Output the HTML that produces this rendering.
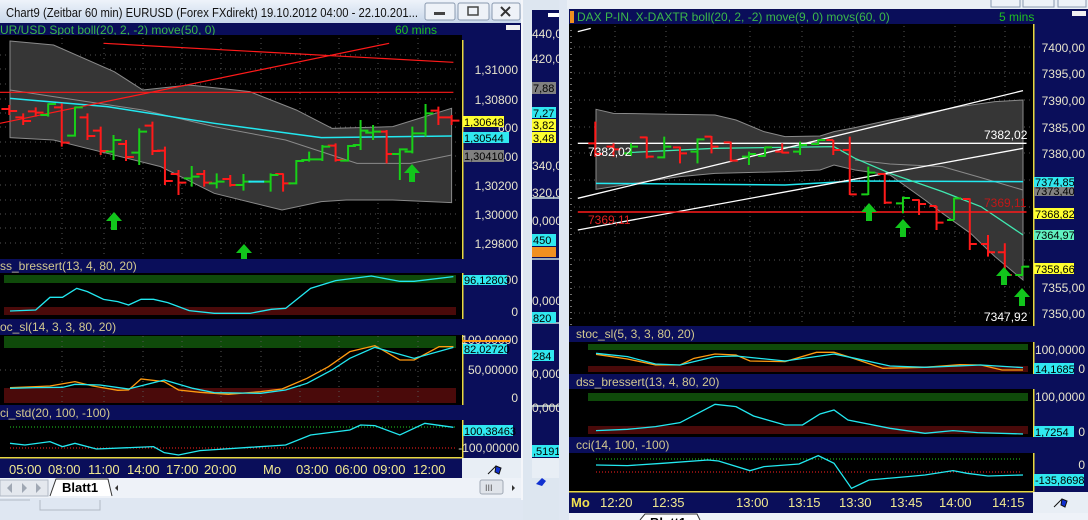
<!DOCTYPE html>
<html><head><meta charset="utf-8"><style>
html,body{margin:0;padding:0;background:#dde6f0;}
svg{display:block;font-family:"Liberation Sans",sans-serif;}
.ax{fill:#e8e4cc;font-size:12px;}
.hd{fill:#d2c890;font-size:12px;}
.tm{fill:#f0e890;font-size:13px;}
.lb{font-size:11px;fill:#000;}
</style></head><body>
<svg width="1088" height="520" viewBox="0 0 1088 520" xmlns="http://www.w3.org/2000/svg">
<defs>
<linearGradient id="tb" x1="0" y1="0" x2="0" y2="1"><stop offset="0" stop-color="#eef3fa"/><stop offset="1" stop-color="#c8d7ea"/></linearGradient>
<path id="arr" d="M0,-9 L8,0 H3 V9 H-3 V0 H-8 Z" fill="#12c51c"/>
</defs>
<rect width="1088" height="520" fill="#dde6f0"/>

<!-- ============ MIDDLE PANEL ============ -->
<rect x="532" y="10" width="30" height="468" fill="#0a0e5a"/>
<rect x="532" y="197" width="30" height="2" fill="#9ab"/>
<rect x="532" y="258" width="30" height="2" fill="#9ab"/>
<rect x="532" y="322" width="30" height="2" fill="#9ab"/>
<rect x="532" y="405" width="30" height="2" fill="#9ab"/>
<rect x="532" y="458" width="30" height="20" fill="#e8eef5"/>
<rect x="548" y="13" width="12" height="4" fill="#fff"/>
<g class="ax">
<text x="532" y="38">440,00</text><text x="532" y="63">420,00</text>
<rect x="532" y="82" width="24" height="12" fill="#808080"/><text x="533" y="92" class="lb">7,88</text>
<rect x="532" y="107" width="24" height="11" fill="#30e8f0"/><text x="533" y="117" class="lb">7,27</text>
<rect x="532" y="119" width="24" height="12" fill="#ffff30"/><text x="533" y="129" class="lb">3,82</text>
<rect x="532" y="132" width="24" height="11" fill="#ffff30"/><text x="533" y="142" class="lb">3,48</text>
<text x="532" y="170">340,00</text><text x="532" y="197">320,00</text>
<text x="532" y="225">0,0000</text>
<rect x="532" y="234" width="24" height="12" fill="#30e8f0"/><text x="533" y="244" class="lb">450</text>
<rect x="532" y="247" width="24" height="10" fill="#f09020"/>
<text x="532" y="305">0,0000</text>
<rect x="532" y="312" width="24" height="11" fill="#30e8f0"/><text x="533" y="322" class="lb">820</text>
<rect x="532" y="350" width="22" height="11" fill="#30e8f0"/><text x="533" y="360" class="lb">284</text>
<text x="532" y="378">0,0000</text><text x="532" y="412">0,0000</text>
<rect x="532" y="445" width="28" height="12" fill="#30e8f0"/><text x="533" y="455" class="lb">,5191</text>
</g>
<path d="M536,484 l6,-6 l4,3 l-4,5 z" fill="#1030d0"/>

<!-- ============ LEFT WINDOW ============ -->
<rect x="0" y="0" width="523" height="500" fill="#dfe7f2"/>
<rect x="0" y="0" width="523" height="23" fill="url(#tb)"/>
<text x="6" y="17" font-size="13" fill="#111" textLength="412" lengthAdjust="spacingAndGlyphs">Chart9 (Zeitbar 60 min)  EURUSD (Forex FXdirekt) 19.10.2012 04:00 - 22.10.201...</text>
<rect x="425" y="3" width="30" height="17" rx="2" fill="#eef2f8" stroke="#8a9ab0"/>
<rect x="434" y="12" width="11" height="3" fill="#444"/>
<rect x="458" y="3" width="31" height="17" rx="2" fill="#eef2f8" stroke="#8a9ab0"/>
<rect x="468" y="7" width="10" height="8" fill="none" stroke="#444" stroke-width="1.5"/>
<rect x="492" y="3" width="28" height="17" rx="2" fill="#eef2f8" stroke="#8a9ab0"/>
<path d="M501,7 l9,9 M510,7 l-9,9" stroke="#333" stroke-width="2"/>

<rect x="0" y="23" width="521" height="12" fill="#0a0e5a"/>
<rect x="506" y="25" width="14" height="5" fill="#f0f0f0"/>
<text x="0" y="34" font-size="12" fill="#3cb84a">UR/USD Spot boll(20, 2, -2) move(50, 0)</text>
<text x="395" y="34" font-size="12" fill="#20c020">60 mins</text>

<rect x="0" y="35" width="462" height="224" fill="#000"/>
<rect x="462" y="35" width="59" height="224" fill="#0a0e5a"/>
<rect x="462" y="40" width="1.5" height="219" fill="#e8d840"/>
<g stroke="#555" stroke-dasharray="1,4" stroke-width="1">
<path d="M62,38V258M104,38V258M143,38V258M182,38V258M221,38V258M261,38V258M300,38V258M339,38V258M378,38V258M418,38V258"/>
<path d="M0,55H460M0,69H460M0,84H460M0,99H460M0,113H460M0,127H460M0,142H460M0,156H460M0,171H460M0,185H460M0,200H460M0,214H460M0,228H460M0,243H460"/>
</g>
<g transform="translate(0,0) scale(0.357,0.3333)">
<polygon points="28,123 150,135 320,215 400,270 530,255 700,275 830,330 930,385 1100,380 1265,325 1265,608 1100,600 970,600 900,605 790,630 600,580 450,500 300,460 150,420 28,413" fill="#363636" stroke="#8a8a8a" stroke-width="1" vector-effect="non-scaling-stroke"/>
<polyline points="28,270 150,290 400,330 600,380 800,420 1000,490 1150,490 1265,465" fill="none" stroke="#8a8a8a" stroke-width="1" vector-effect="non-scaling-stroke"/>
<polyline points="28,295 300,320 600,370 900,413 1265,408" fill="none" stroke="#22e8f0" stroke-width="1.5" vector-effect="non-scaling-stroke"/>
<g stroke="#ff1a1a" stroke-width="1.2" fill="none">
<path d="M0,277H1270" vector-effect="non-scaling-stroke"/>
<path d="M290,130L1270,187" vector-effect="non-scaling-stroke"/>
<path d="M0,370L1090,130" vector-effect="non-scaling-stroke"/>
</g>
<path fill="none" stroke="#ff1a1a" stroke-width="2" vector-effect="non-scaling-stroke" d="M26,315V345M4,327H26M26,333H48M65,340V375M43,352H65M65,363H87M100,322V350M78,334H100M100,338H122M173,310V440M151,322H173M173,428H195M245,340V420M223,352H245M245,408H267M282,380V465M260,392H282M282,453H304M353,420V483M331,432H353M353,471H375M427,365V465M405,377H427M427,453H449M462,440V555M440,452H462M462,543H484M500,510V585M478,522H500M500,548H522M572,510V560M550,522H572M572,548H594M645,525V560M623,537H645M645,555H667M793,520V575M771,522H793M793,550H815M940,430V485M918,437H940M940,480H962M1083,390V490M1061,395H1083M1083,462H1105M1228,320V375M1206,332H1228M1228,352H1250M1265,345V375M1243,352H1265M1265,362H1287"/>
<path fill="none" stroke="#18d018" stroke-width="2" vector-effect="non-scaling-stroke" d="M135,310V350M113,345H135M135,312H157M210,320V410M188,407H210M210,322H232M318,405V480M296,455H318M318,420H340M390,385V495M368,458H390M390,395H412M537,498V560M515,535H537M537,530H559M607,520V565M585,550H607M607,545H629M682,522V572M660,555H682M682,545H704M758,520V575M736,545H758M758,525H780M830,480V553M808,550H830M830,483H852M866,455V485M844,480H866M866,478H888M903,435V483M881,478H903M903,440H925M975,435V485M953,482H975M975,438H997M1010,360V450M988,435H1010M1010,392H1032M1045,375V420M1023,398H1045M1045,395H1067M1120,445V540M1098,462H1120M1120,448H1142M1155,380V460M1133,455H1155M1155,400H1177M1192,312V410M1170,400H1192M1192,340H1214"/>
<path d="M696,545H740" stroke="#22e8f0" stroke-width="2" vector-effect="non-scaling-stroke"/>
</g>
<use href="#arr" x="114" y="221"/>
<use href="#arr" x="244" y="253"/>
<use href="#arr" x="412" y="173"/>
<g class="ax" text-anchor="end">
<text x="518" y="74">1,31000</text><text x="518" y="104">1,30800</text>
<text x="518" y="190">1,30200</text><text x="518" y="219">1,30000</text><text x="518" y="248">1,29800</text>
<text x="518" y="161">400</text>
<text x="518" y="132">600</text>
</g>
<rect x="463" y="116" width="41" height="11" fill="#ffff30"/><text x="464" y="126" class="lb">1,30648</text>
<rect x="463" y="132" width="46" height="11" fill="#30e8f0"/><text x="464" y="142" class="lb">1,30544</text>
<rect x="463" y="150" width="41" height="12" fill="#808080"/><text x="464" y="160" class="lb">1,30410</text>

<!-- dss left -->
<rect x="0" y="259" width="521" height="14" fill="#0a0e5a"/>
<text x="0" y="270" class="hd">ss_bressert(13, 4, 80, 20)</text>
<rect x="0" y="273" width="462" height="46" fill="#000"/>
<rect x="462" y="273" width="59" height="46" fill="#0a0e5a"/><rect x="462" y="273" width="1.5" height="46" fill="#e8d840"/>
<rect x="4" y="275" width="452" height="8" fill="#0f4a0a"/>
<rect x="4" y="307" width="452" height="8" fill="#4a0a0a"/>
<g transform="translate(0,260) scale(0.357,0.3333)">
<polyline fill="none" stroke="#22e8f0" stroke-width="1.3" vector-effect="non-scaling-stroke" points="28,153 100,150 140,112 175,112 215,85 245,95 290,118 330,125 360,135 395,118 430,118 470,128 530,152 600,160 700,160 760,148 800,145 870,85 940,62 1040,48 1120,64 1160,64 1270,50"/>
</g>
<text x="518" y="284" class="ax" text-anchor="end">00</text>
<rect x="463" y="275" width="44" height="10" fill="#30e8f0"/><text x="464" y="284" class="lb">96,12803</text>
<text x="518" y="316" class="ax" text-anchor="end">0</text>

<!-- stoc left -->
<rect x="0" y="319" width="521" height="16" fill="#0a0e5a"/>
<text x="0" y="331" class="hd">oc_sl(14, 3, 3, 80, 20)</text>
<rect x="0" y="335" width="462" height="70" fill="#000"/>
<rect x="462" y="335" width="59" height="70" fill="#0a0e5a"/><rect x="462" y="335" width="1.5" height="70" fill="#e8d840"/>
<rect x="4" y="336" width="452" height="12" fill="#0f4a0a"/>
<rect x="4" y="388" width="452" height="15" fill="#4a0a0a"/>
<g stroke="#555" stroke-dasharray="1,4"><path d="M62,336V404M104,336V404M143,336V404M182,336V404M221,336V404M261,336V404M300,336V404M339,336V404M378,336V404M418,336V404M0,370H460"/></g>
<g transform="translate(0,260) scale(0.357,0.3333)">
<polyline fill="none" stroke="#ff9a10" stroke-width="1.3" vector-effect="non-scaling-stroke" points="28,383 100,380 140,378 210,365 260,378 330,391 360,390 395,357 460,365 500,390 560,397 640,403 730,395 790,387 860,355 920,320 980,275 1050,257 1120,300 1160,300 1230,260 1270,260"/>
<polyline fill="none" stroke="#22e8f0" stroke-width="1.3" vector-effect="non-scaling-stroke" points="28,385 100,383 175,382 210,373 280,375 360,387 460,360 540,385 600,398 730,400 800,390 860,370 930,330 980,295 1050,262 1160,295 1270,262"/>
</g>
<text x="518" y="344" class="ax" text-anchor="end">100,00000</text>
<rect x="462" y="340" width="48" height="2" fill="#ff9a10"/>
<rect x="463" y="344" width="44" height="10" fill="#30e8f0"/><text x="464" y="353" class="lb">82,02720</text>
<text x="518" y="374" class="ax" text-anchor="end">50,00000</text>
<text x="518" y="402" class="ax" text-anchor="end">0</text>

<!-- cci left -->
<rect x="0" y="405" width="521" height="15" fill="#0a0e5a"/>
<text x="0" y="417" class="hd">ci_std(20, 100, -100)</text>
<rect x="0" y="420" width="462" height="38" fill="#000"/>
<rect x="462" y="420" width="59" height="38" fill="#0a0e5a"/><rect x="462" y="420" width="1.5" height="38" fill="#e8d840"/>
<path d="M10,427H456" stroke="#20d020" stroke-dasharray="1,2"/>
<path d="M10,448H456" stroke="#ff2020" stroke-dasharray="1,2"/>
<g transform="translate(0,260) scale(0.357,0.3333)">
<polyline fill="none" stroke="#22e8f0" stroke-width="1.3" vector-effect="non-scaling-stroke" points="28,550 70,555 140,545 175,560 210,550 270,567 430,560 460,578 500,585 560,572 700,562 800,555 870,525 980,510 1010,495 1050,497 1120,525 1190,490 1270,502"/>
</g>
<rect x="463" y="425" width="50" height="11" fill="#30e8f0"/><text x="464" y="435" class="lb">100,38463</text>
<text x="519" y="452" class="ax" text-anchor="end">-100,00000</text>

<rect x="0" y="458" width="462" height="20" fill="#0a0e5a"/>
<rect x="0" y="457" width="462" height="1.5" fill="#e8d840"/>
<rect x="462" y="458" width="59" height="20" fill="#e8eef5"/>
<path d="M488,474 l8,-8 M496,466 l5,2 l-2,6 l-4,-2 z" stroke="#111" fill="#1030d0"/>
<g class="tm"><text x="9" y="474">05:00</text><text x="48" y="474">08:00</text><text x="88" y="474">11:00</text><text x="127" y="474">14:00</text><text x="166" y="474">17:00</text><text x="204" y="474">20:00</text><text x="263" y="474">Mo</text><text x="296" y="474">03:00</text><text x="335" y="474">06:00</text><text x="373" y="474">09:00</text><text x="413" y="474">12:00</text></g>
<rect x="0" y="478" width="521" height="20" fill="#eef2f8"/>
<rect x="0" y="480" width="48" height="16" fill="#e4e8ee" stroke="#b0b8c4"/>
<path d="M12,483v10l-5,-5z M22,483v10l5,-5z M36,483v10l5,-5z" fill="#a0a8b4"/>
<path d="M50,496 L56,479 H108 L112,496" fill="#fff" stroke="#333"/>
<text x="62" y="492" font-size="13" font-weight="bold" fill="#000">Blatt1</text>
<path d="M118,485 l-3,3 l3,3z" fill="#333"/>
<rect x="480" y="480" width="23" height="14" rx="2" fill="#e0e4ea" stroke="#a0a8b4"/>
<text x="485" y="491" font-size="9" fill="#555">III</text>
<path d="M512,485 l3,3 l-3,3z" fill="#333"/>
<rect x="0" y="498" width="523" height="22" fill="#dfe7f2"/>
<path d="M0,500 H30 M40,500 V510 H100 V500" stroke="#b0b8c4" fill="none"/>
<rect x="521" y="0" width="2" height="500" fill="#f4f6fa"/>

<!-- ============ RIGHT WINDOW ============ -->
<rect x="559" y="0" width="10" height="520" fill="#dfe7f2"/>
<rect x="567" y="0" width="521" height="9" fill="#eaeff6"/>
<rect x="991" y="-8" width="29" height="15" fill="#eef2f8" stroke="#8a9ab0"/>
<rect x="1023" y="-8" width="31" height="15" fill="#eef2f8" stroke="#8a9ab0"/>
<rect x="1058" y="-8" width="28" height="15" fill="#eef2f8" stroke="#8a9ab0"/>
<rect x="569" y="9" width="519" height="15" fill="#0a0e5a"/>
<rect x="570" y="11" width="4" height="12" fill="#f09020"/>
<rect x="1072" y="11" width="14" height="5" fill="#f0f0f0"/>
<text x="577" y="21" font-size="12" fill="#3cb84a">DAX P-IN. X-DAXTR boll(20, 2, -2) move(9, 0) movs(60, 0)</text>
<text x="999" y="21" font-size="12" fill="#20c020">5 mins</text>

<rect x="569" y="24" width="464" height="302" fill="#000"/>
<rect x="1033" y="24" width="55" height="302" fill="#0a0e5a"/>
<rect x="1033" y="24" width="1.5" height="302" fill="#e8d840"/>
<path d="M571,30V325" stroke="#ddd" stroke-dasharray="1,5"/>
<g stroke="#555" stroke-dasharray="1,4">
<path d="M615,26V325M666,26V325M750,26V325M802,26V325M853,26V325M904,26V325M955,26V325M1005,26V325"/>
<path d="M574,47H1030M574,73H1030M574,100H1030M574,127H1030M574,153H1030M574,180H1030M574,207H1030M574,233H1030M574,260H1030M574,287H1030M574,313H1030"/>
</g>
<g transform="translate(540,0) scale(0.35,0.3333)">
<polygon points="160,328 210,340 330,342 500,345 560,360 640,395 700,410 800,408 840,395 900,383 1000,360 1100,340 1200,320 1300,305 1380,300 1380,840 1300,770 1230,700 1150,640 1100,600 1000,525 900,510 840,495 800,510 700,515 500,520 400,530 300,545 160,568" fill="#363636" stroke="#8a8a8a" stroke-width="1" vector-effect="non-scaling-stroke"/>
<polyline points="900,480 1000,492 1150,500 1250,530 1380,570" fill="none" stroke="#8a8a8a" vector-effect="non-scaling-stroke"/>
<polyline points="160,550 700,555 900,543 1380,545" fill="none" stroke="#22e8f0" stroke-width="1.5" vector-effect="non-scaling-stroke"/>
<polyline points="250,458 500,445 840,440 900,475 1000,520 1150,575 1260,620 1380,705" fill="none" stroke="#40e8b0" stroke-width="1.3" vector-effect="non-scaling-stroke"/>
<g fill="none" stroke="#fff" stroke-width="1.3">
<path d="M108,95L145,85" vector-effect="non-scaling-stroke"/>
<path d="M108,595L1380,272" vector-effect="non-scaling-stroke"/>
<path d="M108,690L1380,445" vector-effect="non-scaling-stroke"/>
<path d="M108,430H1390" vector-effect="non-scaling-stroke"/>
</g>
<path d="M108,636H1390" stroke="#ff1a1a" stroke-width="1.5" vector-effect="non-scaling-stroke"/>
<path fill="none" stroke="#ff1a1a" stroke-width="2" vector-effect="non-scaling-stroke" d="M158,365V470M138,430H158M158,462H178M210,430V470M190,440H210M210,448H230M305,410V475M285,412H305M305,470H325M400,440V490M380,442H400M400,460H420M490,408V460M470,410H490M490,440H510M545,425V485M525,427H545M545,482H565M692,430V460M672,455H692M692,458H712M838,420V465M818,420H838M838,450H858M885,410V585M865,450H885M885,583H905M985,520V612M965,522H985M985,608H1005M1083,598V645M1063,600H1083M1083,612H1103M1133,618V690M1113,618H1133M1133,668H1153M1228,595V750M1208,597H1228M1228,732H1248M1280,705V770M1260,732H1280M1280,757H1300M1328,730V830M1308,757H1328M1328,825H1348"/>
<path fill="none" stroke="#18d018" stroke-width="2" vector-effect="non-scaling-stroke" d="M260,430V468M240,460H260M260,440H280M355,410V475M335,472H355M355,440H375M450,415V490M430,455H450M450,418H470M597,455V495M577,470H597M597,462H617M643,440V470M623,468H643M643,442H663M743,425V465M723,455H743M743,435H763M795,418V435M775,432H795M795,420H815M938,500V585M918,583H938M938,518H958M1037,590V640M1017,610H1037M1037,594H1057M1183,593V660M1163,660H1183M1183,595H1203M1378,798V828M1358,825H1378M1378,800H1398"/>
</g>
<use href="#arr" x="869" y="212"/>
<use href="#arr" x="903" y="228"/>
<use href="#arr" x="1004" y="276"/>
<use href="#arr" x="1022" y="297"/>
<text x="588" y="156" font-size="12" fill="#fff">7382,02</text>
<text x="984" y="139" font-size="12" fill="#fff">7382,02</text>
<text x="588" y="224" font-size="12" fill="#e02020">7369,11</text>
<text x="984" y="207" font-size="12" fill="#c01818">7369,11</text>
<text x="984" y="321" font-size="12" fill="#fff">7347,92</text>
<g class="ax" text-anchor="end">
<text x="1085" y="52">7400,00</text><text x="1085" y="78">7395,00</text><text x="1085" y="105">7390,00</text><text x="1085" y="132">7385,00</text><text x="1085" y="158">7380,00</text><text x="1085" y="292">7355,00</text><text x="1085" y="318">7350,00</text>
</g>
<rect x="1034" y="177" width="40" height="10" fill="#30e8f0"/><text x="1035" y="186" class="lb">7374,85</text>
<rect x="1034" y="187" width="40" height="9" fill="#808080"/><text x="1035" y="195" class="lb" font-size="10">7373,40</text>
<rect x="1034" y="208" width="40" height="11" fill="#ffff30"/><text x="1035" y="218" class="lb">7368,82</text>
<rect x="1034" y="230" width="40" height="10" fill="#60f0c0"/><text x="1035" y="239" class="lb">7364,97</text>
<rect x="1034" y="263" width="40" height="11" fill="#ffff30"/><text x="1035" y="273" class="lb">7358,66</text>

<rect x="569" y="326" width="519" height="16" fill="#0a0e5a"/>
<text x="576" y="338" class="hd">stoc_sl(5, 3, 3, 80, 20)</text>
<rect x="569" y="342" width="464" height="32" fill="#000"/>
<rect x="1033" y="342" width="55" height="32" fill="#0a0e5a"/><rect x="1033" y="342" width="1.5" height="32" fill="#e8d840"/>
<rect x="588" y="344" width="440" height="6" fill="#0f4a0a"/>
<rect x="588" y="366" width="440" height="6" fill="#4a0a0a"/>
<g transform="translate(540,260) scale(0.35,0.3333)">
<polyline fill="none" stroke="#ff9a10" stroke-width="1.3" vector-effect="non-scaling-stroke" points="160,283 250,297 330,315 400,315 440,295 500,282 560,285 600,303 700,305 790,277 840,277 880,290 980,325 1100,322 1200,314 1260,315 1320,330 1380,330"/>
<polyline fill="none" stroke="#22e8f0" stroke-width="1.3" vector-effect="non-scaling-stroke" points="160,280 250,290 330,312 400,315 500,290 560,288 700,303 840,282 900,295 1000,318 1100,322 1260,315 1380,323"/>
</g>
<text x="1085" y="354" class="ax" text-anchor="end">100,0000</text>
<text x="1085" y="373" class="ax" text-anchor="end">0</text>
<rect x="1034" y="363" width="40" height="11" fill="#30e8f0"/><text x="1035" y="373" class="lb">14,1685</text>

<rect x="569" y="374" width="519" height="15" fill="#0a0e5a"/>
<text x="576" y="386" class="hd">dss_bressert(13, 4, 80, 20)</text>
<rect x="569" y="389" width="464" height="48" fill="#000"/>
<rect x="1033" y="389" width="55" height="48" fill="#0a0e5a"/><rect x="1033" y="389" width="1.5" height="48" fill="#e8d840"/>
<rect x="588" y="393" width="440" height="8" fill="#0f4a0a"/>
<rect x="588" y="426" width="440" height="8" fill="#4a0a0a"/>
<g transform="translate(540,260) scale(0.35,0.3333)">
<polyline fill="none" stroke="#22e8f0" stroke-width="1.3" vector-effect="non-scaling-stroke" points="160,512 250,508 330,500 400,488 500,433 560,440 610,468 700,495 750,495 800,462 840,450 880,480 1000,505 1100,520 1180,512 1250,518 1380,522"/>
</g>
<text x="1085" y="401" class="ax" text-anchor="end">100,0000</text>
<text x="1085" y="436" class="ax" text-anchor="end">0</text>
<rect x="1034" y="426" width="40" height="11" fill="#30e8f0"/><text x="1035" y="436" class="lb">1,7254</text>

<rect x="569" y="437" width="519" height="16" fill="#0a0e5a"/>
<text x="576" y="449" class="hd">cci(14, 100, -100)</text>
<rect x="569" y="453" width="464" height="39" fill="#000"/>
<rect x="1033" y="453" width="55" height="39" fill="#0a0e5a"/><rect x="1033" y="453" width="1.5" height="39" fill="#e8d840"/>
<path d="M596,459H1022" stroke="#20d020" stroke-dasharray="1,2"/>
<path d="M596,472H1022" stroke="#ff2020" stroke-dasharray="1,2"/>
<g transform="translate(540,260) scale(0.35,0.3333)">
<polyline fill="none" stroke="#22e8f0" stroke-width="1.3" vector-effect="non-scaling-stroke" points="160,615 250,617 350,610 480,600 510,603 600,632 640,620 740,612 795,587 840,610 890,685 940,660 1050,650 1100,645 1180,632 1220,640 1280,648 1380,645"/>
</g>
<text x="1085" y="469" class="ax" text-anchor="end">0</text>
<rect x="1034" y="474" width="50" height="12" fill="#30e8f0"/><text x="1035" y="484" class="lb">-135,8698</text>

<rect x="569" y="492" width="464" height="21" fill="#0a0e5a"/>
<rect x="569" y="491" width="464" height="1.5" fill="#e8d840"/>
<rect x="1033" y="492" width="55" height="21" fill="#e8eef5"/>
<path d="M1054,507 l8,-8 M1062,499 l5,2 l-2,6 l-4,-2 z" stroke="#111" fill="#1030d0"/>
<text x="571" y="507" font-size="13" font-weight="bold" fill="#f0e050">Mo</text>
<g class="tm"><text x="600" y="507">12:20</text><text x="652" y="507">12:35</text><text x="736" y="507">13:00</text><text x="788" y="507">13:15</text><text x="839" y="507">13:30</text><text x="890" y="507">13:45</text><text x="939" y="507">14:00</text><text x="992" y="507">14:15</text></g>
<rect x="569" y="513" width="519" height="7" fill="#eef2f8"/>
<path d="M640,520 L645,514 H697 L700,520" fill="#fff" stroke="#333"/>
<text x="650" y="527" font-size="13" font-weight="bold" fill="#000">Blatt1</text>
</svg>
</body></html>
